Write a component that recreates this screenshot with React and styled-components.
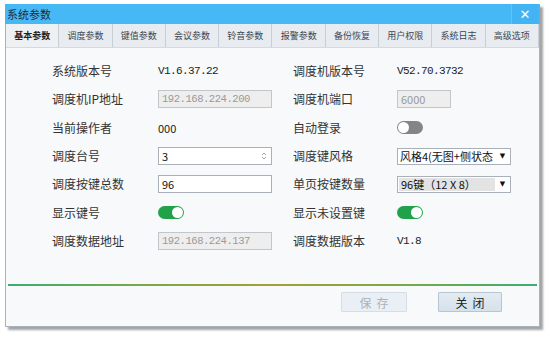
import React from 'react';
import styled, { createGlobalStyle } from 'styled-components';

const GlobalStyle = createGlobalStyle`
  html, body {
    margin: 0;
    padding: 0;
    background: #ffffff;
  }
  body {
    font-family: "Noto Sans CJK SC", "Noto Sans", sans-serif;
    color: #333333;
  }
`;

const CJK = '"Noto Sans CJK SC", "Noto Sans", sans-serif';
const SONG = '"Liberation Mono", "Noto Sans CJK SC", monospace';

const tabs = ['基本参数', '调度参数', '键值参数', '会议参数', '铃音参数', '报警参数', '备份恢复', '用户权限', '系统日志', '高级选项'];

const Page = styled.div`
  width: 553px;
  height: 340px;
  padding: 4px 0 0 5px;
  box-sizing: border-box;
`;

const Window = styled.div`
  width: 535px;
  height: 323px;
  box-sizing: border-box;
  display: flex;
  flex-direction: column;
  background: #f7f9fb;
  border: 1px solid #a9b3bd;
  border-top: none;
  box-shadow: 3px 3px 2px rgba(90, 90, 90, 0.55);
`;

const TitleBar = styled.div`
  height: 20px;
  margin: 0 -1px;
  display: flex;
  align-items: center;
  justify-content: space-between;
  background: #47b8f6;
`;

const Title = styled.span`
  padding-left: 2px;
  font-size: 11px;
  line-height: 20px;
  color: #1e2d3a;
`;

const CloseBtn = styled.div`
  width: 26px;
  height: 20px;
  display: flex;
  align-items: center;
  justify-content: center;
  border-left: 1px solid #5fc3f8;
  background: #42b4f4;
  color: #ffffff;
  font-size: 13px;
  font-weight: bold;
  font-family: "DejaVu Sans", sans-serif;
  margin-right: 2px;
`;

const TabBar = styled.div`
  height: 24px;
  display: grid;
  grid-template-columns: repeat(10, 1fr);
  background: #e8ecf0;
  border-bottom: 1px solid #d4dae0;
  box-sizing: border-box;
`;

const Tab = styled.div`
  display: flex;
  align-items: center;
  justify-content: center;
  font-size: 9px;
  color: ${p => (p.$active ? '#222' : '#3b4650')};
  font-weight: ${p => (p.$active ? 'bold' : 'normal')};
  background: ${p => (p.$active ? '#eef1f4' : '#e8ecf0')};
  border-right: 1px solid #c6ced6;
`;

const Form = styled.div`
  display: grid;
  grid-template-columns: 106px 135px 104px 1fr;
  grid-auto-rows: 28.3px;
  padding: 9px 0 0 46px;
  align-items: center;
`;

const Label = styled.div`
  font-size: 12px;
  line-height: 16px;
  color: #333;
  font-family: ${CJK};
`;

const Value = styled.div`
  font-size: ${p => (p.$song ? '11px' : '11px')};
  letter-spacing: ${p => (p.$song ? '-0.6px' : '0')};
  font-family: ${p => (p.$song ? SONG : CJK)};
  color: #222;
  line-height: 16px;
`;

const Input = styled.div`
  width: ${p => p.$w}px;
  height: 18px;
  box-sizing: border-box;
  display: flex;
  align-items: center;
  justify-content: space-between;
  padding: 0 3px;
  border: 1px solid ${p => (p.$disabled ? '#c2c6ca' : '#a9b0b7')};
  background: ${p => (p.$disabled ? '#eeeeee' : '#ffffff')};
  color: ${p => (p.$disabled ? '#9a9a9a' : '#111')};
  font-size: ${p => (p.$song ? '10.6px' : '11px')};
  letter-spacing: ${p => (p.$song ? '-0.5px' : '0')};
  font-family: ${p => (p.$song ? SONG : CJK)};
`;

const Spin = styled.svg`
  width: 6px;
  height: 10px;
  margin-right: 1px;
`;

const Select = styled.div`
  width: 114px;
  height: 17px;
  box-sizing: border-box;
  display: flex;
  align-items: stretch;
  border: 1px solid #a9b0b7;
  background: #fff;
`;

const SelectText = styled.div`
  flex: 1;
  display: flex;
  align-items: center;
  padding-left: 2px;
  white-space: nowrap;
  font-size: 11px;
  font-family: ${CJK};
  color: #111;
  background: ${p => (p.$highlight ? '#e3e3e3' : '#fff')};
  margin: ${p => (p.$highlight ? '1px 0 1px 1px' : '0')};
`;

const Arrow = styled.div`
  width: 15px;
  display: flex;
  align-items: center;
  justify-content: center;
  font-size: 7px;
  color: #111;
  font-family: "DejaVu Sans", sans-serif;
`;

const Toggle = styled.div`
  width: 26px;
  height: 13px;
  border-radius: 7px;
  background: ${p => (p.$on ? '#21a24a' : '#858585')};
  position: relative;
  &::after {
    content: '';
    position: absolute;
    top: 1px;
    left: ${p => (p.$on ? '14px' : '1px')};
    width: 11px;
    height: 11px;
    border-radius: 50%;
    background: #ffffff;
  }
`;

const Spacer = styled.div`
  flex: 1;
`;

const Divider = styled.div`
  height: 2px;
  margin: 0 2px;
  background: linear-gradient(90deg, #3aae72 0%, #7aa848 25%, #a3a032 50%, #7aa848 75%, #3aae72 100%);
`;

const Footer = styled.div`
  height: 40px;
  display: flex;
  justify-content: flex-end;
  align-items: flex-start;
  gap: 31px;
  padding: 6px 37px 0 0;
  box-sizing: border-box;
`;

const Button = styled.div`
  width: ${p => p.$w}px;
  height: 20px;
  box-sizing: border-box;
  display: flex;
  align-items: center;
  justify-content: center;
  letter-spacing: 5px;
  text-indent: 5px;
  font-size: 12px;
  font-family: ${CJK};
  color: ${p => (p.$disabled ? '#a9b2ba' : '#222')};
  border: 1px solid ${p => (p.$disabled ? '#d6dee5' : '#b9c5d0')};
  background: ${p => (p.$disabled ? '#e9eff4' : 'linear-gradient(#e3ebf2, #d6e1ea)')};
  border-radius: 1px;
`;

const SpinIcon = () => (
  <Spin viewBox="0 0 6 10">
    <path d="M1 4 L3 2 L5 4" fill="none" stroke="#8a8a8a" strokeWidth="0.8" />
    <path d="M1 6 L3 8 L5 6" fill="none" stroke="#8a8a8a" strokeWidth="0.8" />
  </Spin>
);

export default function App() {
  return (
    <>
      <GlobalStyle />
      <Page>
        <Window>
          <TitleBar>
            <Title>系统参数</Title>
            <CloseBtn>✕</CloseBtn>
          </TitleBar>
          <TabBar>
            {tabs.map((t, i) => (
              <Tab key={t} $active={i === 0}>{t}</Tab>
            ))}
          </TabBar>
          <Form>
            <Label>系统版本号</Label>
            <Value $song>V1.6.37.22</Value>
            <Label>调度机版本号</Label>
            <Value $song>V52.70.3732</Value>

            <Label>调度机IP地址</Label>
            <Input $w={114} $disabled $song>192.168.224.200</Input>
            <Label>调度机端口</Label>
            <Input $w={54} $disabled>6000</Input>

            <Label>当前操作者</Label>
            <Value>000</Value>
            <Label>自动登录</Label>
            <Toggle />

            <Label>调度台号</Label>
            <Input $w={114}>3<SpinIcon /></Input>
            <Label>调度键风格</Label>
            <Select>
              <SelectText>风格4(无图+侧状态</SelectText>
              <Arrow>▼</Arrow>
            </Select>

            <Label>调度按键总数</Label>
            <Input $w={114}>96</Input>
            <Label>单页按键数量</Label>
            <Select>
              <SelectText $highlight>96键（12 X 8）</SelectText>
              <Arrow>▼</Arrow>
            </Select>

            <Label>显示键号</Label>
            <Toggle $on />
            <Label>显示未设置键</Label>
            <Toggle $on />

            <Label>调度数据地址</Label>
            <Input $w={114} $disabled $song>192.168.224.137</Input>
            <Label>调度数据版本</Label>
            <Value $song>V1.8</Value>
          </Form>
          <Spacer />
          <Divider />
          <Footer>
            <Button $w={66} $disabled>保存</Button>
            <Button $w={64}>关闭</Button>
          </Footer>
        </Window>
      </Page>
    </>
  );
}
